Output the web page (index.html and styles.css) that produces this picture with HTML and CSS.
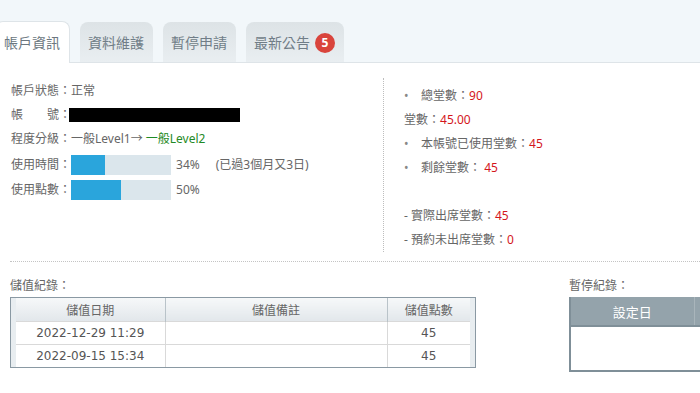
FILE: index.html
```html
<!DOCTYPE html>
<html lang="zh-Hant">

<head>
    <meta charset="UTF-8">
    <meta name="viewport" content="width=device-width, initial-scale=1.0">
    <title>帳戶資訊</title>
    <link rel="stylesheet" href="styles.css">
</head>

<body>
    <nav class="tabs">
        <a href="#account" class="tab active">帳戶資訊</a>
        <a href="#profile" class="tab">資料維護</a>
        <a href="#pause" class="tab">暫停申請</a>
        <a href="#news" class="tab">最新公告<span class="badge">5</span></a>
    </nav>

    <section class="account">
        <div class="info-left">
            <div class="row r1"><span class="label">帳戶狀態：</span>正常</div>
            <div class="row r2"><span class="label">帳　　號：</span><span class="redacted"></span></div>
            <div class="row r3"><span class="label">程度分級：</span>一般Level1→&nbsp;<span class="green">一般Level2</span></div>
            <div class="row">
                <span class="label">使用時間：</span>
                <div class="bar"><div class="fill" style="width: 34%"></div></div>
                <span class="pct">34%</span>
                <span class="note">(已過3個月又3日)</span>
            </div>
            <div class="row">
                <span class="label">使用點數：</span>
                <div class="bar"><div class="fill" style="width: 50%"></div></div>
                <span class="pct">50%</span>
            </div>
        </div>

        <div class="info-right">
            <div class="line"><span class="dot">•</span>總堂數：<span class="red">90</span></div>
            <div class="line">堂數：<span class="red">45.00</span></div>
            <div class="line"><span class="dot">•</span>本帳號已使用堂數：<span class="red">45</span></div>
            <div class="line"><span class="dot">•</span>剩餘堂數：&nbsp;<span class="red">45</span></div>
            <div class="line"></div>
            <div class="line">- 實際出席堂數：<span class="red">45</span></div>
            <div class="line">- 預約未出席堂數：<span class="red">0</span></div>
        </div>
    </section>

    <section class="records">
        <div class="record-block">
            <div class="block-title">儲值紀錄：</div>
            <div class="record-frame">
                <table class="record-table">
                    <colgroup>
                        <col class="c-date">
                        <col class="c-note">
                        <col class="c-points">
                    </colgroup>
                    <thead>
                        <tr>
                            <th>儲值日期</th>
                            <th>儲值備註</th>
                            <th>儲值點數</th>
                        </tr>
                    </thead>
                    <tbody>
                        <tr>
                            <td>2022-12-29 11:29</td>
                            <td></td>
                            <td>45</td>
                        </tr>
                        <tr>
                            <td>2022-09-15 15:34</td>
                            <td></td>
                            <td>45</td>
                        </tr>
                    </tbody>
                </table>
            </div>
        </div>

        <div class="pause-block">
            <div class="block-title">暫停紀錄：</div>
            <table class="pause-table">
                <thead>
                    <tr>
                        <th class="p-date">設定日</th>
                        <th></th>
                    </tr>
                </thead>
                <tbody>
                    <tr>
                        <td></td>
                        <td></td>
                    </tr>
                </tbody>
            </table>
        </div>
    </section>
</body>

</html>
```

FILE: styles.css
```css
* {
    box-sizing: border-box;
}

body {
    margin: 0;
    font-family: "Noto Sans", "Noto Sans CJK TC", sans-serif;
    font-size: 12px;
    color: #666;
    background-color: #fff;
    overflow: hidden;
}

/* tabs */
.tabs {
    display: flex;
    align-items: flex-end;
    gap: 10px;
    height: 63px;
    background-color: #f2f7fa;
    border-bottom: 1px solid #dee4e8;
}

.tab {
    display: flex;
    align-items: center;
    height: 40px;
    padding: 1px 9px 0 8px;
    border-radius: 8px 8px 0 0;
    background: linear-gradient(#dde3e6, #e9eef1);
    color: #707d87;
    font-size: 14px;
    line-height: 20px;
    text-decoration: none;
}

.tab.active {
    height: 42px;
    margin-left: -5px;
    margin-bottom: -1px;
    background: #fff;
    border: 1px solid #dee4e8;
    border-bottom: none;
    color: #6b7780;
}

.badge {
    display: inline-flex;
    align-items: center;
    justify-content: center;
    width: 20px;
    height: 20px;
    margin-left: 5px;
    border-radius: 50%;
    background-color: #d9443c;
    color: #fff;
    font-size: 12px;
    font-weight: bold;
}

/* account info */
.account {
    display: flex;
    margin-left: 10px;
    padding: 15px 0 9px;
    border-bottom: 1px dotted #c4c4c4;
}

.info-left {
    width: 373px;
    padding: 1px 0 0 1px;
}

.row {
    display: flex;
    align-items: center;
    height: 25px;
    line-height: 18px;
}

.row.r1 {
    height: 24px;
}

.row.r2 {
    height: 23px;
}

.row.r3 {
    height: 26px;
}

.redacted {
    display: inline-block;
    width: 171px;
    height: 14px;
    margin-left: -2px;
    background-color: #000;
}

.green {
    color: #1f8a25;
}

.bar {
    width: 100px;
    height: 20px;
    background-color: #dbe6ec;
}

.fill {
    height: 100%;
    background-color: #2aa5dc;
}

.pct {
    margin-left: 5px;
}

.note {
    margin-left: 16px;
}

.info-right {
    flex: 1;
    padding: 6px 0 0 20px;
    border-left: 1px dotted #bdbdbd;
    line-height: 24px;
}

.line {
    height: 24px;
}

.dot {
    display: inline-block;
    width: 17px;
    color: #888;
}

.red {
    color: #d4161c;
}

/* records */
.records {
    display: flex;
    margin-left: 10px;
    padding-top: 13px;
}

.block-title {
    line-height: 22px;
}

.record-block {
    width: 466px;
    flex-shrink: 0;
}

.record-frame {
    padding: 0 5px;
    border: 1px solid #8a99a3;
    background-color: #e8edf0;
}

.record-table {
    width: 454px;
    border-collapse: collapse;
    table-layout: fixed;
    font-family: "DejaVu Sans", "Noto Sans CJK TC", sans-serif;
    font-size: 12px;
}

.c-date {
    width: 149px;
}

.c-note {
    width: 222px;
}

.c-points {
    width: 83px;
}

.record-table th {
    height: 23px;
    padding: 0;
    font-weight: normal;
    color: #666;
    background: linear-gradient(#f6f8f9, #e2e7eb);
    border-left: 1px solid #b9c3c9;
}

.record-table th:first-child,
.record-table td:first-child {
    border-left: none;
}

.record-table td {
    height: 23px;
    padding: 0;
    text-align: center;
    color: #555;
    background-color: #fff;
    border-top: 1px solid #d9d9d9;
    border-left: 1px solid #d9d9d9;
}

.pause-block {
    flex: 1;
    min-width: 0;
    overflow: hidden;
    margin-left: 93px;
}

.pause-table {
    width: 300px;
    border-collapse: collapse;
    table-layout: fixed;
    border-left: 2px solid #7f8f98;
    border-bottom: 2px solid #7f8f98;
    font-size: 13px;
}

.pause-table th {
    height: 29px;
    padding: 0;
    font-weight: normal;
    color: #fff;
    background-color: #94a3ab;
    border-bottom: 2px solid #7f8f98;
    border-left: 1px solid #a9b5bb;
}

.pause-table th.p-date {
    width: 124px;
    border-left: none;
}

.pause-table td {
    height: 45px;
    padding: 0;
    background-color: #fff;
}
```
